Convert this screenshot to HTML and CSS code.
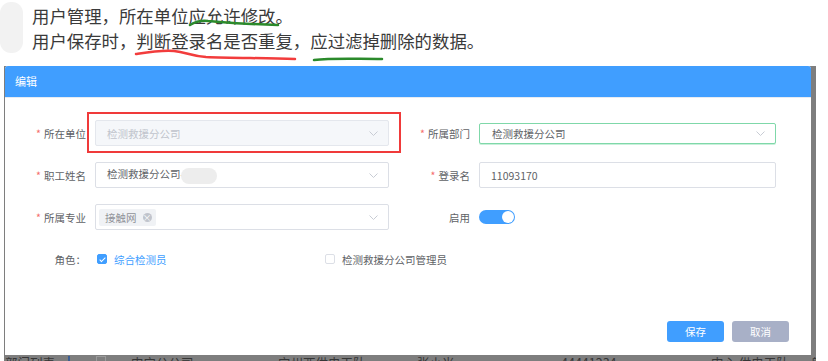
FILE: index.html
```html
<!DOCTYPE html>
<html lang="zh-CN">
<head>
    <meta charset="UTF-8">
    <title>编辑用户</title>
    <link rel="stylesheet" href="styles.css">
</head>
<body>
    <!-- review note above the screenshot -->
    <div class="note">
        <div class="blob"></div>
        <p>用户管理，所在单位应允许修改。</p>
        <p>用户保存时，判断登录名是否重复，应过滤掉删除的数据。</p>
        <svg class="marks" width="500" height="66" viewBox="0 0 500 66">
            <path d="M190 25 C195 22 200 20 208 21 C222 22 242 24 278 25" stroke="#2b8a2b" stroke-width="2.5" fill="none" stroke-linecap="round"/>
            <path d="M136 54 C149 52 161 50 174 51 C186 52 191 56 206 57 C231 58 262 58 295 59" stroke="#f23c3c" stroke-width="2.5" fill="none" stroke-linecap="round"/>
            <path d="M314 60 C332 58 352 59 382 59" stroke="#2b8a2b" stroke-width="2.5" fill="none" stroke-linecap="round"/>
        </svg>
    </div>

    <div class="shot">
        <div class="modal">
            <div class="modal-head">编辑</div>
            <div class="modal-body">
                <div class="form-grid">
                    <label class="label"><i>*</i>所在单位</label>
                    <div class="field disabled">
                        <span>检测救援分公司</span>
                        <svg class="arrow" width="9" height="5" viewBox="0 0 9 5"><path d="M0.5 0.5 L4.5 4.5 L8.5 0.5" stroke="#c8ccd4" fill="none"/></svg>
                    </div>
                    <label class="label"><i>*</i>所属部门</label>
                    <div class="field focus short">
                        <span>检测救援分公司</span>
                        <svg class="arrow" width="9" height="5" viewBox="0 0 9 5"><path d="M0.5 0.5 L4.5 4.5 L8.5 0.5" stroke="#c8ccd4" fill="none"/></svg>
                    </div>

                    <label class="label"><i>*</i>职工姓名</label>
                    <div class="field">
                        <span>检测救援分公司-<b class="blur"></b></span>
                        <svg class="arrow" width="9" height="5" viewBox="0 0 9 5"><path d="M0.5 0.5 L4.5 4.5 L8.5 0.5" stroke="#c8ccd4" fill="none"/></svg>
                    </div>
                    <label class="label"><i>*</i>登录名</label>
                    <div class="field">
                        <span>11093170</span>
                    </div>

                    <label class="label"><i>*</i>所属专业</label>
                    <div class="field tags">
                        <span class="tag">接触网<em class="tag-close">×</em></span>
                        <svg class="arrow" width="9" height="5" viewBox="0 0 9 5"><path d="M0.5 0.5 L4.5 4.5 L8.5 0.5" stroke="#c8ccd4" fill="none"/></svg>
                    </div>
                    <label class="label">启用</label>
                    <div class="switch-cell"><span class="switch"></span></div>
                </div>

                <div class="role-row">
                    <label class="label">角色：</label>
                    <div class="check checked"><span class="box"></span>综合检测员</div>
                    <div class="check"><span class="box"></span>检测救援分公司管理员</div>
                </div>

                <div class="modal-foot">
                    <button class="btn primary">保存</button>
                    <button class="btn muted">取消</button>
                </div>

                <div class="mark"></div>
            </div>
        </div>

        <!-- table row peeking below the dialog -->
        <div class="table-peek">
            <span class="c0">部门列表</span>
            <span class="bar"></span>
            <span class="cb"></span>
            <span class="c1">中宁公公司</span>
            <span class="c2">宁州西供电工队</span>
            <span class="c3">张小米</span>
            <span class="c4">44441234</span>
            <span class="c5">中心 供电工队</span>
            <span class="c6">一般员工</span>
        </div>
    </div>
</body>
</html>
```

FILE: styles.css
```css
body {
    margin: 0;
    background: #fff;
    font-family: "Noto Sans CJK SC", "Noto Sans", sans-serif;
    width: 828px;
    height: 361px;
    overflow: hidden;
}
.note {
    position: relative;
    height: 66px;
    box-sizing: border-box;
    padding: 3px 0 0 32px;
}
.note p {
    margin: 0;
    font-size: 17.4px;
    line-height: 25px;
    color: #3a3a3a;
    position: relative;
}
.blob {
    position: absolute;
    left: 0;
    top: 2px;
    width: 23px;
    height: 51px;
    border-radius: 11px;
    background: #f2f2f2;
}
.marks {
    position: absolute;
    left: 0;
    top: 0;
}
.shot {
    margin-left: 4px;
    width: 812px;
    height: 295px;
    background: #7e7e7e;
    padding-left: 1px;
    box-sizing: border-box;
    overflow: hidden;
}
.modal {
    width: 806px;
    background: #fff;
    border-radius: 3px 3px 0 0;
}
.modal-head {
    height: 31px;
    line-height: 31px;
    background: #409eff;
    color: #fff;
    font-size: 11px;
    padding-left: 10px;
    border-radius: 3px 3px 0 0;
}
.modal-body {
    position: relative;
    border-top: 1px solid #e6ebf2;
    padding: 22px 22px 13px 0;
    font-size: 10.5px;
    color: #606266;
}
.form-grid {
    display: grid;
    grid-template-columns: 90px 294px 90px 297px;
    grid-auto-rows: 26px;
    row-gap: 16px;
    align-items: center;
}
.label {
    text-align: right;
    padding-right: 9px;
    color: #606266;
}
.label i {
    font-style: normal;
    color: #f56c6c;
    margin-right: 3px;
}
.field {
    height: 26px;
    box-sizing: border-box;
    border: 1px solid #dcdfe6;
    border-radius: 2px;
    padding: 0 10px 0 11px;
    display: flex;
    align-items: center;
    justify-content: space-between;
    background: #fff;
}
.field.disabled {
    background: #f5f7fa;
    border-color: #e4e7ed;
    color: #c0c4cc;
}
.field.focus {
    border-color: #7fd8a9;
    box-shadow: 0 1px 0 #c9f0db;
    padding-left: 12px;
}
.field.short {
    height: 21px;
}
.field.tags {
    padding-left: 3px;
}
.blur {
    display: inline-block;
    width: 36px;
    height: 16px;
    margin-left: -3px;
    vertical-align: middle;
    border-radius: 8px;
    background: #ededed;
}
.tag {
    display: inline-flex;
    align-items: center;
    height: 17px;
    padding: 0 4px 0 6px;
    background: #f0f2f5;
    color: #909399;
    border-radius: 2px;
}
.tag-close {
    font-style: normal;
    display: inline-block;
    width: 9px;
    height: 9px;
    line-height: 9px;
    text-align: center;
    margin-left: 6px;
    border-radius: 50%;
    background: #c0c4cc;
    color: #fff;
    font-size: 9px;
}
.switch {
    display: block;
    width: 36px;
    height: 14px;
    border-radius: 7px;
    background: #409eff;
    position: relative;
}
.switch::after {
    content: "";
    position: absolute;
    right: 1px;
    top: 1px;
    width: 12px;
    height: 12px;
    border-radius: 50%;
    background: #fff;
}
.role-row {
    display: flex;
    align-items: center;
    height: 20px;
    margin-top: 19px;
}
.role-row .label {
    width: 90px;
    box-sizing: border-box;
}
.check {
    width: 226px;
    display: flex;
    align-items: center;
    color: #606266;
    padding-left: 2px;
}
.check .box {
    width: 10px;
    height: 10px;
    box-sizing: border-box;
    border: 1px solid #dcdfe6;
    border-radius: 2px;
    margin-right: 7px;
    position: relative;
}
.check.checked {
    color: #409eff;
}
.check.checked .box {
    background: #409eff;
    border-color: #409eff;
}
.check.checked .box::after {
    content: "";
    position: absolute;
    left: 2.5px;
    top: 0.5px;
    width: 2px;
    height: 5px;
    border: solid #fff;
    border-width: 0 1px 1px 0;
    transform: rotate(45deg);
}
.modal-foot {
    display: flex;
    justify-content: flex-end;
    gap: 8px;
    margin-top: 52px;
}
.btn {
    width: 57px;
    height: 21px;
    border: none;
    border-radius: 3px;
    color: #fff;
    font-family: inherit;
    font-size: 10.5px;
    padding: 0;
}
.btn.primary {
    background: #409eff;
}
.btn.muted {
    background: #a8b0c7;
}
.mark {
    position: absolute;
    left: 82px;
    top: 14px;
    width: 314px;
    height: 41px;
    box-sizing: border-box;
    border: 2px solid #f03a3a;
}
.table-peek {
    height: 6px;
    overflow: hidden;
    display: flex;
    font-size: 12.5px;
    line-height: 14px;
    padding-top: 1px;
    color: #363636;
    white-space: nowrap;
}
.table-peek span {
    display: block;
    flex: none;
}
.c0 { width: 63px; }
.bar { width: 2px; height: 14px; background: #3d5f93; }
.cb { width: 8px; height: 8px; border: 1px solid #9a9a9a; margin-left: 26px; }
.c1 { margin-left: 25px; width: 147px; }
.c2 { width: 139px; }
.c3 { width: 144px; }
.c4 { width: 150px; }
.c5 { margin-right: 10px; }
```
